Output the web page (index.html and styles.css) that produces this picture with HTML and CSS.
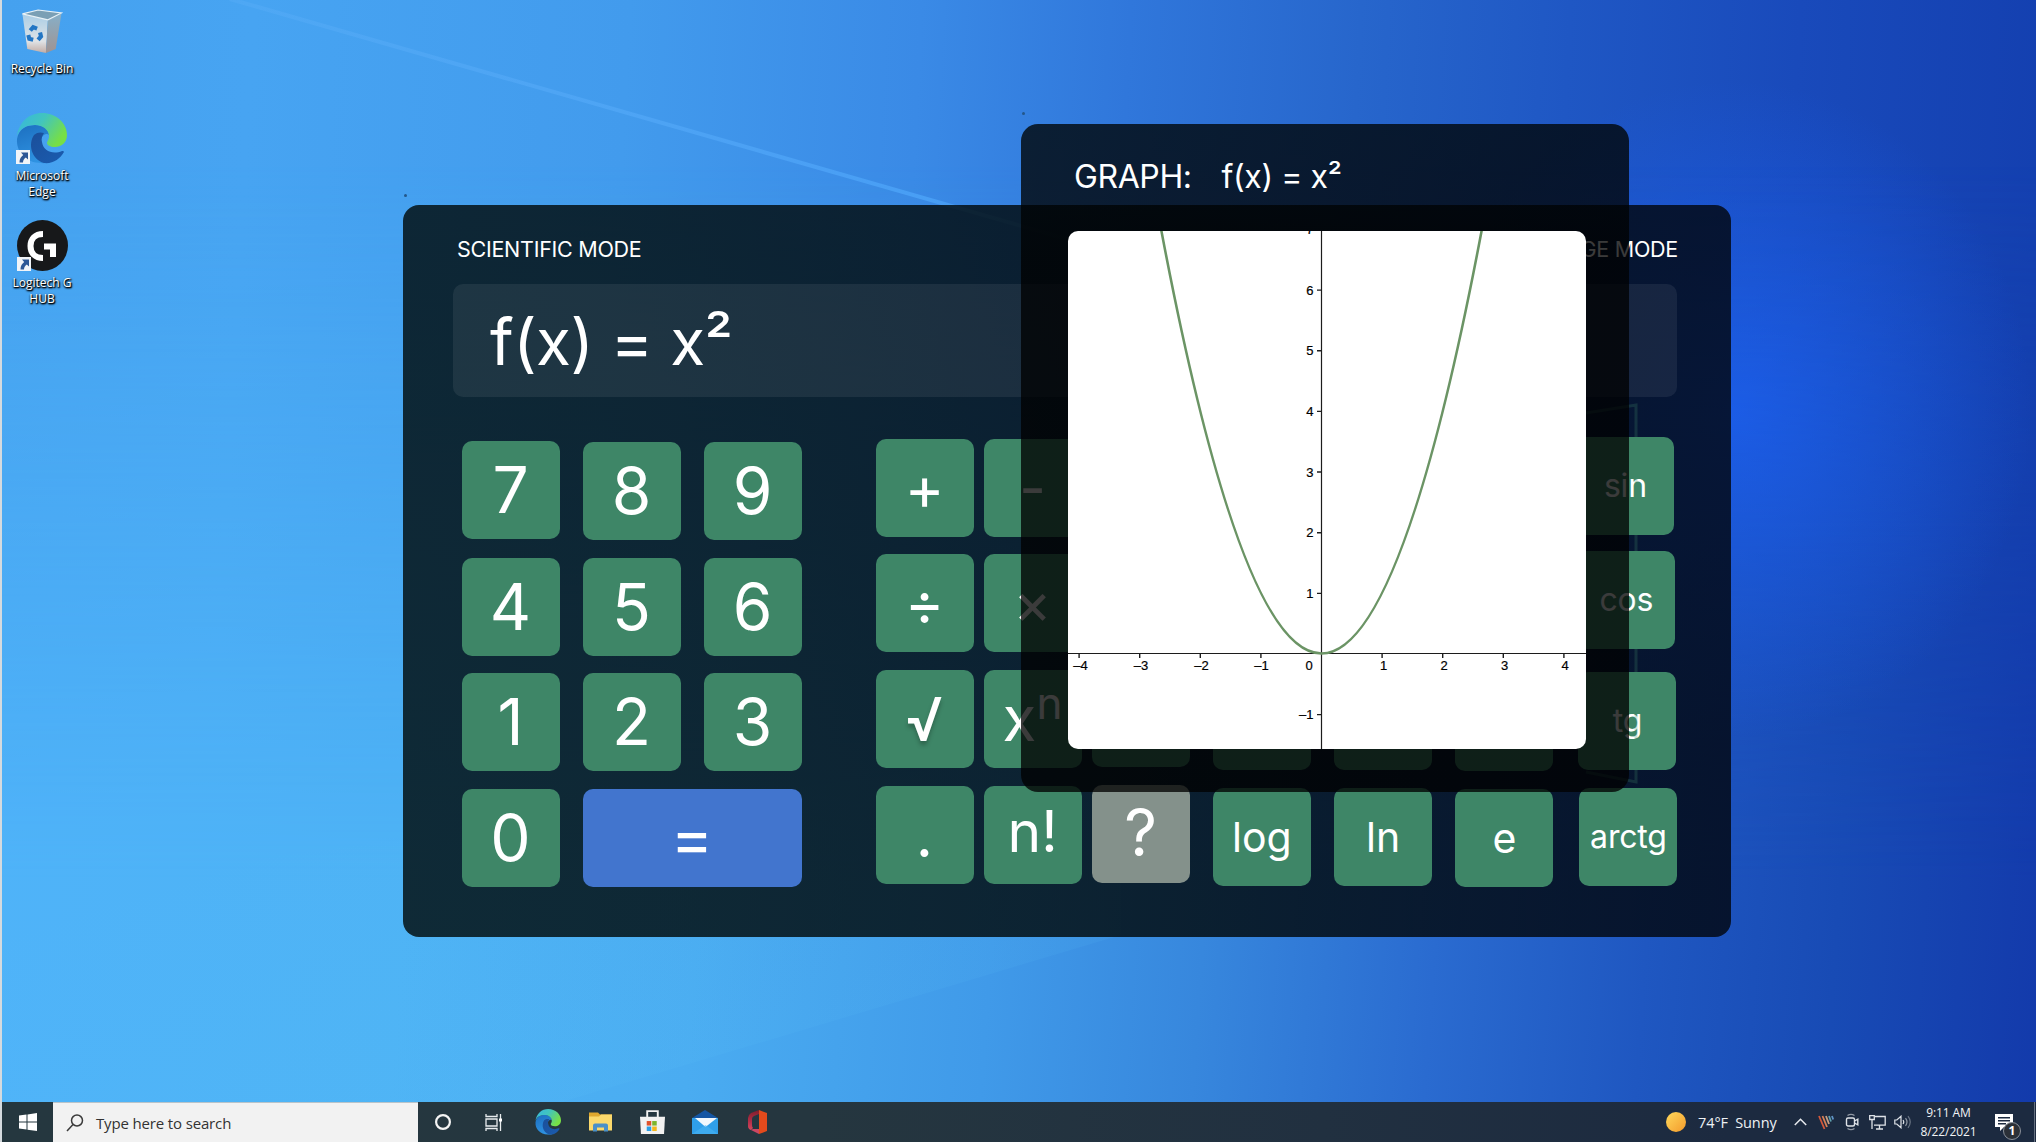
FILE: index.html
```html
<!DOCTYPE html>
<html lang="en">
<head>
<meta charset="utf-8">
<title>Calculator</title>
<link rel="stylesheet" href="styles.css">
</head>
<body>
<svg width="0" height="0" class="defs" aria-hidden="true">
  <defs>
    <linearGradient id="eg1" x1="0" y1="0" x2="1" y2="0.5"><stop offset="0" stop-color="#35b5e2"/><stop offset=".5" stop-color="#42c5bd"/><stop offset="1" stop-color="#77df45"/></linearGradient>
    <linearGradient id="eg2" x1="0" y1="0" x2="0.4" y2="1"><stop offset="0" stop-color="#1c6fc0"/><stop offset="1" stop-color="#2f93e2"/></linearGradient>
    <linearGradient id="eg3" x1="0" y1="0" x2="1" y2="1"><stop offset="0" stop-color="#1b4f9a"/><stop offset="1" stop-color="#1a5cb0"/></linearGradient>
    <linearGradient id="binL" x1="0" y1="0" x2="0" y2="1"><stop offset="0" stop-color="#a9cde6"/><stop offset=".7" stop-color="#dfe3e6"/><stop offset="1" stop-color="#c3aca4"/></linearGradient>
    <linearGradient id="binR" x1="0" y1="0" x2="0" y2="1"><stop offset="0" stop-color="#86b0ca"/><stop offset="1" stop-color="#a09391"/></linearGradient>
    <linearGradient id="sun" x1="0" y1="0" x2="1" y2="1"><stop offset="0" stop-color="#ffd95c"/><stop offset="1" stop-color="#f39a2b"/></linearGradient>
    <linearGradient id="office" x1="0" y1="0" x2="0" y2="1"><stop offset="0" stop-color="#7f1d2b"/><stop offset=".6" stop-color="#b5304a"/><stop offset="1" stop-color="#d8475c"/></linearGradient>
    <symbol id="edge" viewBox="0 0 51 51">
      <path fill="url(#eg2)" d="M1 26C3 15 11 12 19 12c9 0 14 5 14 10-2-2-5-1-7 2-4 8 2 19 14 19l3-1C37 49 31 51 25 50 10 50 0 39 1 26z"/>
      <path fill="url(#eg3)" d="M18 22c-6 9-3 24 10 28 9 1 16-4 20-11 0-1-1-1-2-1-9 4-19 0-20-9-1-3 0-6 2-9-3-1-7-1-10 2z"/>
      <path fill="url(#eg1)" d="M1 23C3 9 13 0 26 0c14 0 25 10 25 22 0 8-6 12-12 12-5 0-8-2-8-4 0-2 2-3 2-7C33 17 27 12 19 12 11 12 4 15 1 23z"/>
    </symbol>
    <symbol id="shortcut" viewBox="0 0 14 14">
      <rect width="14" height="14" fill="#f1f4f8"/>
      <path fill="#2c5796" d="M5 2.500h7v7L9.800 7.600C8 9 7 10.500 7 12.500H3.500C3.500 9 5 6.800 7.200 5z"/>
    </symbol>
  </defs>
</svg>

<main class="desktop">
  <div class="lower-glow"></div>
  <svg class="wallpaper" viewBox="0 0 2036 1102" preserveAspectRatio="none">
    <defs>
      <linearGradient id="beam" gradientUnits="userSpaceOnUse" x1="230" y1="0" x2="1160" y2="266"><stop offset="0" stop-color="#6db8ff" stop-opacity=".18"/><stop offset=".75" stop-color="#52acff" stop-opacity=".6"/><stop offset="1" stop-color="#52acff" stop-opacity="0"/></linearGradient>
      <linearGradient id="floor" gradientUnits="userSpaceOnUse" x1="800" y1="1020" x2="700" y2="700"><stop offset="0" stop-color="#5cc4f8" stop-opacity=".1"/><stop offset="1" stop-color="#5cc4f8" stop-opacity="0"/></linearGradient>
    </defs>
    <path d="M228 -1L1160 266" stroke="url(#beam)" stroke-width="4"/>
    <path d="M0 892L1120 745V935L560 1102H0z" fill="url(#floor)"/>
  </svg>

  <nav class="shortcuts">
    <div class="shortcut">
      <svg class="bin" viewBox="0 0 42 46"><path fill="url(#binL)" d="M1 5l26 6-2 34-19-4z"/><path fill="url(#binR)" d="M27 11l14-7-6 37-10 4z"/><path fill="#7a9fb5" d="M1 5l16-4 24 3-14 7z"/><path fill="none" stroke="#e8f1f6" stroke-width="1.200" d="M1 5l16-4 24 3-14 7z"/><g fill="none" stroke="#2376c4" stroke-width="4.200"><path d="M9 22l3-3.500 4 1.500"/><path d="M19 24l1 4-3 3.500"/><path d="M12 31.500l-4-1-1-4"/></g></svg>
      <span>Recycle Bin</span>
    </div>
    <div class="shortcut two">
      <div class="pic"><svg viewBox="0 0 51 51"><use href="#edge"/></svg><svg class="arrow"><use href="#shortcut"/></svg></div>
      <span>Microsoft<br>Edge</span>
    </div>
    <div class="shortcut two">
      <div class="pic"><svg viewBox="0 0 51 51"><circle cx="25.500" cy="25.500" r="25.500" fill="#17181a"/><path fill="none" stroke="#fff" stroke-width="6" d="M26 14C18 14 13.500 19 13.500 26S18 38 26 38M27 26.500h9V37"/></svg><svg class="arrow"><use href="#shortcut"/></svg></div>
      <span>Logitech G<br>HUB</span>
    </div>
  </nav>

  <section class="window calculator">
    <svg class="pane" viewBox="0 0 60 384"><path d="M1 10L51 2V379L1 369" fill="none" stroke="#3e8769" stroke-opacity=".25" stroke-width="3"/></svg>
    <header class="modes"><span>SCIENTIFIC MODE</span><span>CHANGE MODE</span></header>
    <div class="display">f(x) = x²</div>
    <div class="keys">
      <div class="digits">
        <button class="seven">7</button><button>8</button><button>9</button>
        <button>4</button><button>5</button><button>6</button>
        <button>1</button><button>2</button><button>3</button>
        <button>0</button><button class="equals">=</button>
      </div>
      <div class="functions">
        <div class="col c1"><button>+</button><button>÷</button><button class="root">√</button><button>.</button></div>
        <div class="col c2"><button class="minus">-</button><button>×</button><button class="power">x<sup>n</sup></button><button class="factorial">n!</button></div>
        <div class="col c3"><button></button><button></button><button></button><button class="help">?</button></div>
        <div class="col c4 mid"><button></button><button></button><button></button><button>log</button></div>
        <div class="col c5 mid"><button></button><button></button><button></button><button>ln</button></div>
        <div class="col c6 mid"><button></button><button></button><button></button><button>e</button></div>
        <div class="col c7"><button>sin</button><button>cos</button><button>tg</button><button>arctg</button></div>
      </div>
    </div>
  </section>
  <i class="speck calc-speck"></i>
  <i class="speck graph-speck"></i>

  <section class="window graph">
    <header><span>GRAPH:</span><span>f(x) = x²</span></header>
    <svg class="plot" viewBox="0 0 518 518">
      <path d="M0 422.500H518M253.500 0V518" stroke="#1c1c1c" stroke-width="1.200"/>
      <path d="M11.100 423v4M71.700 423v4M132.300 423v4M192.900 423v4M314.100 423v4M374.700 423v4M435.300 423v4M495.900 423v4M253 483.600h-4M253 362.400h-4M253 301.700h-4M253 241h-4M253 180.400h-4M253 119.700h-4M253 59.100h-4" stroke="#1c1c1c" stroke-width="1.400"/>
      <!-- y = x², one unit = 60.65px, drawn as a single quadratic from x = -3 to 3 -->
      <path d="M71.550 -123.350Q253.500 968.350 435.450 -123.350" fill="none" stroke="#6b9465" stroke-width="2.600"/>
      <g class="x-labels"><text x="12.500" y="439">–4</text><text x="73" y="439">–3</text><text x="133.500" y="439">–2</text><text x="193.500" y="439">–1</text><text x="241" y="439">0</text><text x="315.500" y="439">1</text><text x="376" y="439">2</text><text x="436.500" y="439">3</text><text x="497" y="439">4</text></g>
      <g class="y-labels"><text x="245.500" y="488">–1</text><text x="245.500" y="367">1</text><text x="245.500" y="306">2</text><text x="245.500" y="245.500">3</text><text x="245.500" y="185">4</text><text x="245.500" y="124">5</text><text x="245.500" y="64">6</text><text x="245.500" y="3">7</text></g>
    </svg>
  </section>
</main>

<footer class="taskbar">
  <svg class="start" viewBox="0 0 18 18"><path fill="#fff" d="M0 2.500l7.500-1v7H0zM8.500 1.400L18 0v8.500H8.500zM0 9.500h7.500v7l-7.500-1zM8.500 9.500H18V18l-9.500-1.300z"/></svg>
  <label class="search"><svg viewBox="0 0 18 18"><g fill="none" stroke="#3b3b3b" stroke-width="1.500"><circle cx="11" cy="6.500" r="5.500"/><path d="M7 10.500L1 17"/></g></svg><span>Type here to search</span></label>
  <div class="apps">
    <svg class="cortana" viewBox="0 0 16 16"><circle cx="8" cy="8" r="6.900" fill="none" stroke="#f4f4f4" stroke-width="2.200"/></svg>
    <svg class="tasks" viewBox="0 0 17 17"><g fill="none" stroke="#e8ecee" stroke-width="1.300"><path d="M1 0v2.500h11V0M1 17v-2.500h11V17M1 5h11v7H1zM15.500 0v17"/></g><path fill="#fff" d="M14 4.500h3v3h-3z"/></svg>
    <svg class="app-edge" viewBox="0 0 51 51"><use href="#edge"/></svg>
    <svg class="folder" viewBox="0 0 23 19"><path fill="#e0a82e" d="M0 0h9l2 2h12v5H0z"/><path fill="#fbd96c" d="M0 4h10l2-2h11v16H0z"/><path fill="#4a90c8" d="M4 19v-6q0-2 2-2h11q2 0 2 2v6h-4v-4H8v4z"/></svg>
    <svg class="store" viewBox="0 0 26 25"><path fill="none" stroke="#f2f2f2" stroke-width="2" d="M7.500 8V1.200h11V8"/><path fill="#f2f2f2" d="M0 7h26l-1 18H1z"/><path fill="#e0532c" d="M7 11.500h4.700v4.700H7z"/><path fill="#7db52c" d="M12.700 11.500h4.700v4.700h-4.700z"/><path fill="#2b9fe6" d="M7 17.200h4.700v4.700H7z"/><path fill="#f5b81c" d="M12.700 17.200h4.700v4.700h-4.700z"/></svg>
    <svg class="mail" viewBox="0 0 26 24"><path fill="#1556a4" d="M0 8L13 0l13 8v4H0z"/><path fill="#2f9fea" d="M0 8v16h26V8z"/><path fill="#f2f8fd" d="M3 8h22L13.500 17z"/><path fill="#49b4f1" d="M0 24l13.500-9L26 24z" opacity=".6"/></svg>
    <svg class="office" viewBox="0 0 19 24"><path fill="url(#office)" d="M11 0L3 3Q0 5 0 8v8q0 3 3 4l2-2q-1-1-1-3V9q0-2 2-3l5-2z"/><path fill="#cb4763" d="M3 20l8 4v-5H5z"/><path fill="#e34a1c" d="M11 0l8 3v18l-8 3z"/></svg>
  </div>
  <div class="tray">
    <svg class="sun" viewBox="0 0 20 20"><circle cx="10" cy="10" r="10" fill="url(#sun)"/></svg>
    <span class="weather">74°F&nbsp; Sunny</span>
    <svg class="chevron" viewBox="0 0 13 8"><path d="M.8 7L6.500 1.300 12.200 7" fill="none" stroke="#e8ebef" stroke-width="1.500"/></svg>
    <svg class="voice" viewBox="0 0 16 15"><g fill="none" stroke-width="1.800"><path stroke="#d4583b" d="M1 1l5.500 13"/><path stroke="#d98055" d="M4.500 1L9 12"/><path stroke="#c9a183" d="M8 1l3 8"/><path stroke="#5f9fae" d="M11 1l2 5.500"/><path stroke="#5f93c4" d="M14 1l1.200 3.500"/></g></svg>
    <svg class="meet" viewBox="0 0 14 18"><g fill="none" stroke="#dfe3e8" stroke-width="1.400"><rect x="1.500" y="5" width="8" height="8" rx="1.500"/><path d="M9.500 8l3.300-1.800v5.600L9.500 10"/><path opacity=".6" d="M2.500 2.500Q6 .3 9.500 2.500M2.500 15.500q3.500 2.200 7 0"/></g></svg>
    <svg class="net" viewBox="0 0 17 15"><g fill="none" stroke="#dfe3e8" stroke-width="1.300"><path d="M6 1.500h10.200v8.700H5M10.500 10v4M7 14h7M.7.700h4.600v3.800H.7zM3 4.500V14"/></g></svg>
    <svg class="sound" viewBox="0 0 18 14"><g fill="none" stroke="#dfe3e8" stroke-width="1.200"><path d="M.8 5h2L7 1.200v11.600L2.800 9h-2zM9 5q1.500 2 0 4"/><path opacity=".6" d="M11.500 3.200q3 3.800 0 7.600"/><path opacity=".4" d="M14 1.200q4.500 5.800 0 11.600"/></g></svg>
    <div class="clock"><span>9:11 AM</span><span>8/22/2021</span></div>
    <div class="notice"><svg viewBox="0 0 18 17"><path fill="#fff" d="M0 0h18v13H9l-4 4v-4H0z"/><path stroke="#1c2a40" stroke-width="1.400" d="M3 3.700h12M3 6.700h12M3 9.700h8"/></svg><b>1</b></div>
    <i class="peek"></i>
  </div>
</footer>
</body>
</html>
```
FILE: styles.css
```css
* { box-sizing: border-box; }
html, body { margin: 0; height: 100%; overflow: hidden; }
body {
  width: 2036px;
  height: 1142px;
  display: flex;
  flex-direction: column;
  border-left: 2px solid #d5dade;
  color: #fff;
  font-family: Inter, "Liberation Sans", sans-serif;
}
svg { display: block; flex: none; }
.defs { position: absolute; }

.desktop {
  position: relative;
  flex: 1;
  min-height: 0;
  background: linear-gradient(93deg, #45a1ef 0%, #47a4f2 12%, #429bed 30%, #3a8ae6 44%, #3077db 54%, #2766cc 65%, #1f57c4 75%, #194abb 86%, #133eae 100%);
}
.lower-glow {
  position: absolute;
  inset: 0;
  background: linear-gradient(94deg, #4fb3f9 0%, #4eb3f5 22%, #4aacf1 36%, #409ae9 50%, #3787dd 60%, #2a6bd0 71%, #1f57c1 81%, #184bb5 90%, #133aab 100%);
  mask-image: linear-gradient(to bottom, transparent 15%, #000 80%);
}
.desktop::before {
  content: "";
  position: absolute;
  inset: 0;
  z-index: 0;
  background: radial-gradient(ellipse 300px 330px at 1730px 410px, rgba(28, 96, 240, .8), rgba(28, 96, 240, 0));
}
.lower-glow::after {
  content: "";
  position: absolute;
  inset: 0;
  background: radial-gradient(ellipse 300px 330px at 1730px 410px, rgba(28, 96, 240, .8), rgba(28, 96, 240, 0));
}
.wallpaper { position: absolute; inset: 0; width: 100%; height: 100%; }

.shortcuts {
  position: relative;
  width: 80px;
  display: flex;
  flex-direction: column;
  align-items: center;
  padding-top: 9px;
  font: 12px/16px "Open Sans", "Noto Sans", sans-serif;
  text-align: center;
  text-shadow: 0 1px 2px #000, 1px 1px 2px #000, 1px 1px 1px rgba(0, 0, 0, .8);
}
.shortcut { display: flex; flex-direction: column; align-items: center; height: 104px; gap: 7px; white-space: nowrap; }
.shortcut.two { height: 107px; gap: 4px; }
.bin { width: 42px; height: 45px; }
.pic { position: relative; width: 51px; height: 51px; }
.pic svg { width: 51px; height: 51px; }
.pic .arrow { position: absolute; left: 0; bottom: 0; width: 14px; height: 14px; }

.window { position: absolute; border-radius: 16px; }

.calculator {
  left: 401px;
  top: 205px;
  width: 1328px;
  height: 732px;
  padding: 0 52px 0 50px;
  background: linear-gradient(90deg, rgba(0, 10, 10, .81), rgba(0, 7, 8, .81) 60%, rgba(0, 3, 8, .79));
}
.modes {
  display: flex;
  justify-content: space-between;
  margin: 31px 1px 0 4px;
  font-size: 21.500px;
  line-height: 27px;
  letter-spacing: -.27px;
}
.display {
  margin-top: 21px;
  height: 113px;
  margin-right: 2px;
  padding-left: 37px;
  border-radius: 10px;
  background: rgba(255, 255, 255, .07);
  font-size: 64px;
  line-height: 116px;
  letter-spacing: -.5px;
}
.keys { display: flex; padding: 39.500px 0 0 8.500px; gap: 74px; }
.digits { display: grid; grid-template-columns: repeat(3, 98px); grid-auto-rows: 98px; gap: 17.700px 23px; padding-top: 5.500px; height: max-content; }
button {
  height: 98px;
  width: 100%;
  padding: 0;
  border: 0;
  border-radius: 10px;
  background: #3e8667;
  color: #fff;
  font: 64px/98px Inter, "Liberation Sans", sans-serif;
  font-weight: 390;
  display: flex;
  align-items: center;
  justify-content: center;
}
.seven { margin-top: -1px; }
.equals { grid-column: span 2; background: #4275ce; }
.functions { display: flex; }
.col { width: 98px; flex: none; display: flex; flex-direction: column; gap: 17.700px; }
.c1 { padding-top: 2px; margin-right: 10px; }
.c2 { padding-top: 2px; margin-right: 10px; }
.c3 { padding-top: 1.500px; margin-right: 23.300px; }
.c4, .c5 { padding-top: 4.500px; margin-right: 23.300px; }
.c6 { padding-top: 5px; margin-right: 26px; gap: 17.800px; }
.c7 { padding-top: 0; gap: 18px; }
.c1 button { font-size: 60px; }
.c2 button { font-size: 58px; }
.col .root { font-size: 60px; font-weight: 500; text-shadow: 0 4px 4px rgba(0, 0, 0, .25); }
.c2 .power { font-size: 62px; }
.c2 .power sup { font-size: 44px; line-height: 40px; margin-top: -32px; }
.c2 .factorial { padding-bottom: 6px; font-size: 57px; }
.c3 .help { background: #84918b; padding-bottom: 2px; }
.mid button { font-size: 41px; font-weight: 370; }
.c7 button { font-size: 32px; font-weight: 370; letter-spacing: -.2px; }
.c7 button:nth-child(1) { margin-left: -3px; width: 98px; }
.c7 button:nth-child(2) { margin: -2px 0 0 -2px; width: 98px; }
.c7 button:nth-child(3) { margin: 5px 0 0 -1px; width: 98px; }
.pane { position: absolute; left: 1182px; top: 198px; width: 60px; height: 384px; }

.speck { position: absolute; width: 3px; height: 3px; border-radius: 50%; background: #24578a; }
.calc-speck { left: 402px; top: 194px; }
.graph-speck { left: 1020px; top: 112px; }

.graph {
  left: 1019px;
  top: 124px;
  width: 608px;
  height: 668px;
  padding: 0 43px 0 47px;
  border-radius: 17px;
  background: linear-gradient(rgba(0, 6, 8, .8), rgba(0, 0, 0, .77) 20%);
}
.graph header { display: flex; gap: 30px; padding-left: 6px; margin-top: 33px; font-size: 32px; line-height: 40px; height: 74px; white-space: pre; letter-spacing: -.4px; }
.plot { width: 518px; height: 518px; border-radius: 10px; background: #fff; }
.plot text { font: 13px "Liberation Sans", Arial, sans-serif; fill: #000; stroke: #000; stroke-width: .2px; }
.x-labels text { text-anchor: middle; }
.y-labels text { text-anchor: end; }

.taskbar {
  height: 40px;
  display: flex;
  align-items: center;
  background: linear-gradient(90deg, #25373f 0%, #25363f 40%, #213040 65%, #1c2a40 85%, #1c2a40 100%);
  font-family: "Open Sans", "Noto Sans", sans-serif;
}
.start { width: 18px; height: 18px; margin: 0 16px 0 17px; }
.search {
  width: 365px;
  height: 40px;
  display: flex;
  align-items: center;
  gap: 12px;
  padding-left: 13px;
  background: #f2f2f2;
  border-top: 1px solid #b9c4ca;
  color: #333;
  font-size: 15px;
  letter-spacing: -.15px;
}
.search svg { width: 18px; height: 18px; }
.apps { display: flex; align-items: center; }
.cortana { width: 16px; height: 16px; margin-left: 17px; }
.tasks { width: 17px; height: 17px; margin-left: 34px; }
.app-edge { width: 26px; height: 26px; margin-left: 33px; }
.folder { width: 23px; height: 20px; margin-left: 28px; }
.store { width: 25px; height: 26px; margin-left: 28px; }
.mail { width: 26px; height: 24px; margin-left: 27px; }
.office { width: 19px; height: 24px; margin-left: 30px; }
.tray { margin-left: auto; display: flex; align-items: center; height: 40px; }
.sun { width: 20px; height: 20px; margin-right: 12px; }
.weather { width: 78px; font-size: 14.500px; white-space: nowrap; color: #eef1f4; letter-spacing: -.1px; }
.chevron { width: 13px; height: 8px; margin-left: 18px; }
.voice { width: 16px; height: 15px; margin-left: 11px; }
.meet { width: 14px; height: 18px; margin-left: 11px; }
.net { width: 17px; height: 15px; margin-left: 10px; }
.sound { width: 18px; height: 14px; margin-left: 8px; }
.clock { width: 55px; margin-left: 9px; display: flex; flex-direction: column; align-items: center; font-size: 12px; line-height: 19px; white-space: nowrap; color: #f2f4f6; letter-spacing: -.1px; }
.notice { position: relative; width: 18px; margin: 0 21px 0 19px; }
.notice svg { width: 18px; height: 17px; }
.notice b {
  position: absolute;
  left: 8px;
  top: 8px;
  width: 18px;
  height: 18px;
  border: 1px solid #8a9099;
  border-radius: 50%;
  background: #2b3038;
  font-size: 12px;
  line-height: 16px;
  text-align: center;
}
.peek { width: 1px; height: 40px; margin-right: 1px; background: #667080; }
```
